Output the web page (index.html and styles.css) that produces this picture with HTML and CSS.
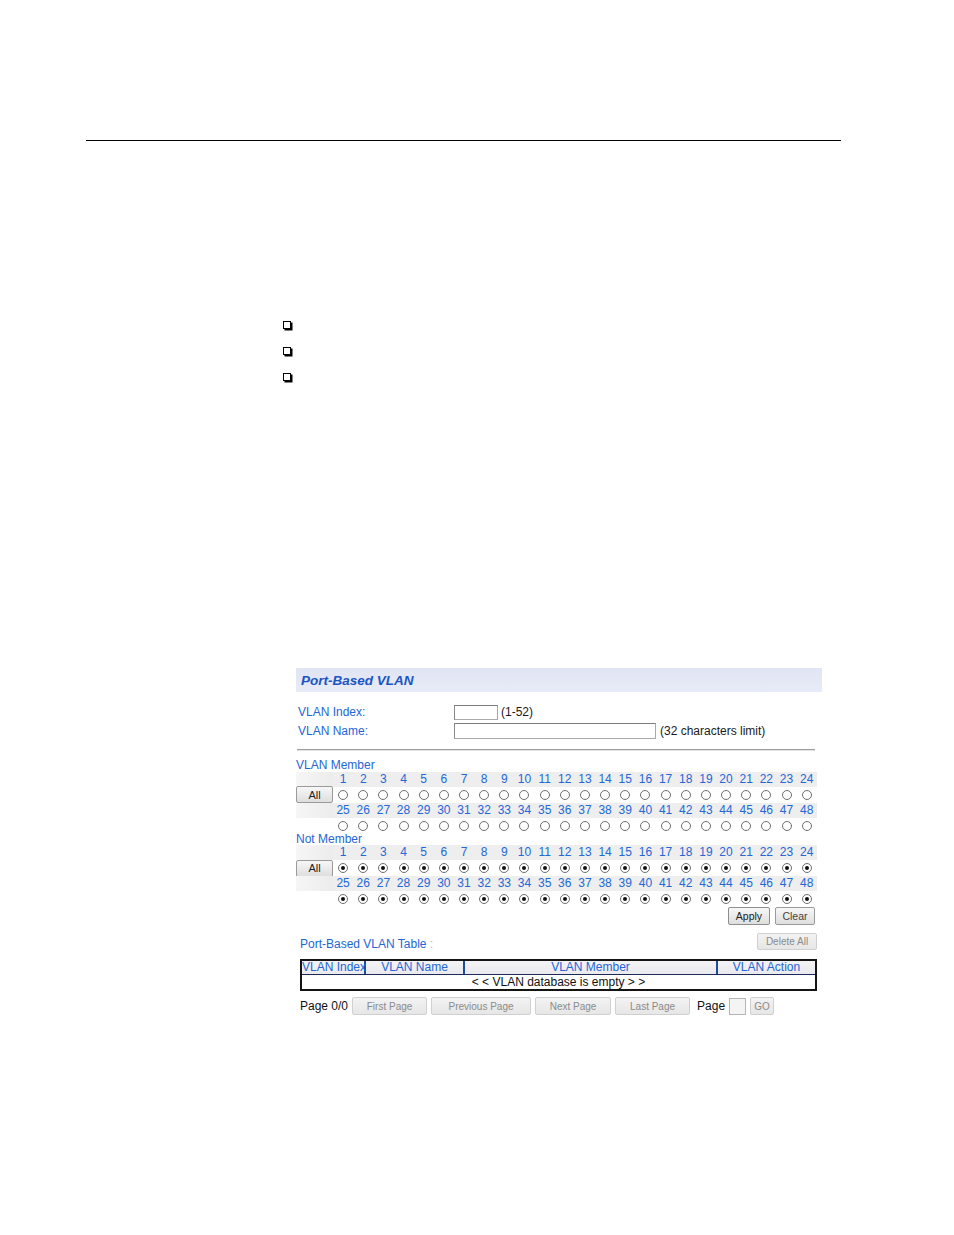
FILE: index.html
```html
<!DOCTYPE html>
<html>
<head>
<meta charset="utf-8">
<link rel="stylesheet" href="styles.css">
</head>
<body>
<div class="page">
  <div class="rule"></div>
  <ul class="checks">
    <li><span class="box"></span></li>
    <li><span class="box"></span></li>
    <li><span class="box"></span></li>
  </ul>

  <div class="panel">
    <div class="titlebar">Port-Based VLAN</div>

    <div class="form">
      <div class="frow"><span class="flabel">VLAN Index:</span><span class="input short"></span><span class="hint">(1-52)</span></div>
      <div class="frow"><span class="flabel">VLAN Name:</span><span class="input long"></span><span class="hint">(32 characters limit)</span></div>
    </div>
    <div class="sep"></div>

    <div class="grouplabel first">VLAN Member</div>
    <div class="pgrid">
      <div class="band"></div>
      <div class="n">1</div><div class="n">2</div><div class="n">3</div><div class="n">4</div><div class="n">5</div><div class="n">6</div><div class="n">7</div><div class="n">8</div><div class="n">9</div><div class="n">10</div><div class="n">11</div><div class="n">12</div><div class="n">13</div><div class="n">14</div><div class="n">15</div><div class="n">16</div><div class="n">17</div><div class="n">18</div><div class="n">19</div><div class="n">20</div><div class="n">21</div><div class="n">22</div><div class="n">23</div><div class="n">24</div>
      <div class="allcell"><span class="btn all">All</span></div>
      <div class="r"><span class="radio"></span></div><div class="r"><span class="radio"></span></div><div class="r"><span class="radio"></span></div><div class="r"><span class="radio"></span></div><div class="r"><span class="radio"></span></div><div class="r"><span class="radio"></span></div><div class="r"><span class="radio"></span></div><div class="r"><span class="radio"></span></div><div class="r"><span class="radio"></span></div><div class="r"><span class="radio"></span></div><div class="r"><span class="radio"></span></div><div class="r"><span class="radio"></span></div><div class="r"><span class="radio"></span></div><div class="r"><span class="radio"></span></div><div class="r"><span class="radio"></span></div><div class="r"><span class="radio"></span></div><div class="r"><span class="radio"></span></div><div class="r"><span class="radio"></span></div><div class="r"><span class="radio"></span></div><div class="r"><span class="radio"></span></div><div class="r"><span class="radio"></span></div><div class="r"><span class="radio"></span></div><div class="r"><span class="radio"></span></div><div class="r"><span class="radio"></span></div>
      <div class="band"></div>
      <div class="n">25</div><div class="n">26</div><div class="n">27</div><div class="n">28</div><div class="n">29</div><div class="n">30</div><div class="n">31</div><div class="n">32</div><div class="n">33</div><div class="n">34</div><div class="n">35</div><div class="n">36</div><div class="n">37</div><div class="n">38</div><div class="n">39</div><div class="n">40</div><div class="n">41</div><div class="n">42</div><div class="n">43</div><div class="n">44</div><div class="n">45</div><div class="n">46</div><div class="n">47</div><div class="n">48</div>
      <div class="empty"></div>
      <div class="r"><span class="radio"></span></div><div class="r"><span class="radio"></span></div><div class="r"><span class="radio"></span></div><div class="r"><span class="radio"></span></div><div class="r"><span class="radio"></span></div><div class="r"><span class="radio"></span></div><div class="r"><span class="radio"></span></div><div class="r"><span class="radio"></span></div><div class="r"><span class="radio"></span></div><div class="r"><span class="radio"></span></div><div class="r"><span class="radio"></span></div><div class="r"><span class="radio"></span></div><div class="r"><span class="radio"></span></div><div class="r"><span class="radio"></span></div><div class="r"><span class="radio"></span></div><div class="r"><span class="radio"></span></div><div class="r"><span class="radio"></span></div><div class="r"><span class="radio"></span></div><div class="r"><span class="radio"></span></div><div class="r"><span class="radio"></span></div><div class="r"><span class="radio"></span></div><div class="r"><span class="radio"></span></div><div class="r"><span class="radio"></span></div><div class="r"><span class="radio"></span></div>
    </div>

    <div class="grouplabel">Not Member</div>
    <div class="pgrid">
      <div class="band"></div>
      <div class="n">1</div><div class="n">2</div><div class="n">3</div><div class="n">4</div><div class="n">5</div><div class="n">6</div><div class="n">7</div><div class="n">8</div><div class="n">9</div><div class="n">10</div><div class="n">11</div><div class="n">12</div><div class="n">13</div><div class="n">14</div><div class="n">15</div><div class="n">16</div><div class="n">17</div><div class="n">18</div><div class="n">19</div><div class="n">20</div><div class="n">21</div><div class="n">22</div><div class="n">23</div><div class="n">24</div>
      <div class="allcell"><span class="btn all">All</span></div>
      <div class="r"><span class="radio on"></span></div><div class="r"><span class="radio on"></span></div><div class="r"><span class="radio on"></span></div><div class="r"><span class="radio on"></span></div><div class="r"><span class="radio on"></span></div><div class="r"><span class="radio on"></span></div><div class="r"><span class="radio on"></span></div><div class="r"><span class="radio on"></span></div><div class="r"><span class="radio on"></span></div><div class="r"><span class="radio on"></span></div><div class="r"><span class="radio on"></span></div><div class="r"><span class="radio on"></span></div><div class="r"><span class="radio on"></span></div><div class="r"><span class="radio on"></span></div><div class="r"><span class="radio on"></span></div><div class="r"><span class="radio on"></span></div><div class="r"><span class="radio on"></span></div><div class="r"><span class="radio on"></span></div><div class="r"><span class="radio on"></span></div><div class="r"><span class="radio on"></span></div><div class="r"><span class="radio on"></span></div><div class="r"><span class="radio on"></span></div><div class="r"><span class="radio on"></span></div><div class="r"><span class="radio on"></span></div>
      <div class="band"></div>
      <div class="n">25</div><div class="n">26</div><div class="n">27</div><div class="n">28</div><div class="n">29</div><div class="n">30</div><div class="n">31</div><div class="n">32</div><div class="n">33</div><div class="n">34</div><div class="n">35</div><div class="n">36</div><div class="n">37</div><div class="n">38</div><div class="n">39</div><div class="n">40</div><div class="n">41</div><div class="n">42</div><div class="n">43</div><div class="n">44</div><div class="n">45</div><div class="n">46</div><div class="n">47</div><div class="n">48</div>
      <div class="empty"></div>
      <div class="r"><span class="radio on"></span></div><div class="r"><span class="radio on"></span></div><div class="r"><span class="radio on"></span></div><div class="r"><span class="radio on"></span></div><div class="r"><span class="radio on"></span></div><div class="r"><span class="radio on"></span></div><div class="r"><span class="radio on"></span></div><div class="r"><span class="radio on"></span></div><div class="r"><span class="radio on"></span></div><div class="r"><span class="radio on"></span></div><div class="r"><span class="radio on"></span></div><div class="r"><span class="radio on"></span></div><div class="r"><span class="radio on"></span></div><div class="r"><span class="radio on"></span></div><div class="r"><span class="radio on"></span></div><div class="r"><span class="radio on"></span></div><div class="r"><span class="radio on"></span></div><div class="r"><span class="radio on"></span></div><div class="r"><span class="radio on"></span></div><div class="r"><span class="radio on"></span></div><div class="r"><span class="radio on"></span></div><div class="r"><span class="radio on"></span></div><div class="r"><span class="radio on"></span></div><div class="r"><span class="radio on"></span></div>
    </div>

    <div class="actions">
      <span class="btn apply">Apply</span>
      <span class="btn clear">Clear</span>
    </div>

    <div class="tablehead">
      <span class="tlabel">Port-Based VLAN Table <span class="colon">:</span></span>
      <span class="btn off delall">Delete All</span>
    </div>

    <div class="vtable">
      <div class="thead">
        <div class="th">VLAN Index</div>
        <div class="th">VLAN Name</div>
        <div class="th">VLAN Member</div>
        <div class="th last">VLAN Action</div>
      </div>
      <div class="tbody">&lt; &lt; VLAN database is empty &gt; &gt;</div>
    </div>

    <div class="pager">
      <span class="ptext">Page 0/0</span>
      <span class="btn off first">First Page</span>
      <span class="btn off prev">Previous Page</span>
      <span class="btn off next">Next Page</span>
      <span class="btn off lastp">Last Page</span>
      <span class="ptext plabel">Page</span>
      <span class="input pinput"></span>
      <span class="btn off go">GO</span>
    </div>
  </div>
</div>
</body>
</html>
```
FILE: styles.css
```css
html, body {
  margin: 0;
  padding: 0;
  background: #ffffff;
}

.page {
  width: 954px;
  padding-top: 140px;
  font-family: "Liberation Sans", Arial, sans-serif;
}

.rule {
  margin-left: 86px;
  width: 755px;
  height: 1px;
  background: #000;
}

.checks {
  list-style: none;
  margin: 180px 0 0 283px;
  padding: 0;
}

.checks li {
  height: 26px;
}

.box {
  display: block;
  width: 5.5px;
  height: 5.5px;
  border: 1.5px solid #000;
  box-shadow: 1.5px 1.5px 0 #000;
}

.panel {
  margin-top: 269px;
  margin-left: 296px;
  width: 526px;
  font-size: 12px;
  color: #2466d6;
}

.titlebar {
  height: 24px;
  display: flex;
  align-items: center;
  padding-left: 5px;
  background: linear-gradient(#e0e5f4, #e8ebf7);
  font-weight: bold;
  font-style: italic;
  font-size: 13.5px;
  color: #1a55c2;
}

.form {
  margin-top: 12px;
  padding-left: 2px;
  display: flex;
  flex-direction: column;
  gap: 3px;
}

.frow {
  display: flex;
  align-items: center;
  height: 16px;
}

.flabel {
  width: 156px;
}

.input {
  display: block;
  box-sizing: border-box;
  background: #fff;
  border: 1px solid #a9a9a9;
  border-top-color: #7c7c7c;
  border-left-color: #8a8a8a;
}

.input.short {
  width: 44px;
  height: 15px;
}

.input.long {
  width: 202px;
  height: 16px;
}

.hint {
  color: #1a1a1a;
  margin-left: 3px;
}

.frow .long + .hint {
  margin-left: 4px;
}

.sep {
  margin: 10px 0 0 1px;
  width: 518px;
  height: 1px;
  background: #9e9e9e;
  border-bottom: 1px solid #e2e2e2;
}

.grouplabel {
  height: 12px;
  line-height: 12px;
}

.grouplabel.first {
  margin-top: 7px;
  height: 14px;
  line-height: 14px;
}

.pgrid {
  display: grid;
  grid-template-columns: 37px repeat(24, 20.17px);
  grid-template-rows: repeat(4, 15.3px);
}

.band {
  background: linear-gradient(90deg, #f6f6f6, #ececec);
}

.n {
  background: #eeeeee;
  text-align: center;
  line-height: 15.3px;
  color: #2468d8;
}

.r {
  display: flex;
  align-items: center;
  justify-content: center;
}

.empty {
  background: transparent;
}

.radio {
  display: block;
  box-sizing: border-box;
  width: 10px;
  height: 10px;
  border: 1px solid #6e6e6e;
  border-radius: 50%;
  background: #fff;
  position: relative;
}

.radio.on::after {
  content: "";
  position: absolute;
  left: 2px;
  top: 2px;
  width: 4px;
  height: 4px;
  border-radius: 50%;
  background: #111;
}

.allcell {
  display: flex;
  align-items: center;
}

.btn {
  box-sizing: border-box;
  display: inline-flex;
  align-items: center;
  justify-content: center;
  height: 18px;
  font-size: 10.5px;
  color: #222;
  background: linear-gradient(#f7f7f7, #dedede);
  border: 1px solid #9a9a9a;
  border-radius: 2px;
}

.btn.all {
  width: 37px;
  height: 17px;
  font-size: 11px;
}

.actions {
  margin-top: 1px;
  padding-right: 7px;
  display: flex;
  justify-content: flex-end;
  gap: 5px;
}

.btn.apply {
  width: 42px;
  border-color: #8e8e8e;
}

.btn.clear {
  width: 40px;
  color: #444;
}

.btn.off {
  color: #8a8a8a;
  font-size: 10px;
  background: linear-gradient(#f3f3f3, #e6e6e6);
  border: 1px solid #d0d0d0;
}

.tablehead {
  margin-top: 8px;
  height: 17px;
  padding-left: 4px;
  padding-right: 5px;
  display: flex;
  align-items: flex-start;
  justify-content: space-between;
}

.tlabel {
  padding-top: 4px;
  color: #2466d6;
}

.colon {
  color: #b4bccc;
}

.btn.delall {
  width: 60px;
  height: 17px;
}

.vtable {
  margin-top: 9px;
  margin-left: 4px;
  width: 517px;
  box-sizing: border-box;
  border: 2px solid #141414;
}

.thead {
  display: grid;
  grid-template-columns: 64px 99px 253px 97px;
  height: 13px;
  background: linear-gradient(#f4f4f6, #e9e9ee);
  border-bottom: 1.5px solid #1c2a5a;
}

.th {
  box-sizing: border-box;
  text-align: center;
  line-height: 13px;
  white-space: nowrap;
  overflow: visible;
  color: #2466d6;
  border-right: 2px solid #1d4c9e;
}

.th.last {
  border-right: none;
}

.tbody {
  height: 14px;
  line-height: 14px;
  text-align: center;
  color: #111;
  background: #fff;
}

.pager {
  margin-top: 6px;
  padding-left: 4px;
  height: 18px;
  display: flex;
  align-items: center;
}

.ptext {
  color: #111;
}

.btn.first {
  width: 75px;
  margin-left: 4px;
}

.btn.prev {
  width: 100px;
  margin-left: 4px;
}

.btn.next {
  width: 76px;
  margin-left: 4px;
}

.btn.lastp {
  width: 75px;
  margin-left: 4px;
}

.plabel {
  margin-left: 7px;
}

.input.pinput {
  width: 17px;
  height: 17px;
  margin-left: 4px;
  background: #f4f4f4;
  border-color: #b5b5b5;
}

.btn.go {
  width: 24px;
  margin-left: 4px;
}
```
